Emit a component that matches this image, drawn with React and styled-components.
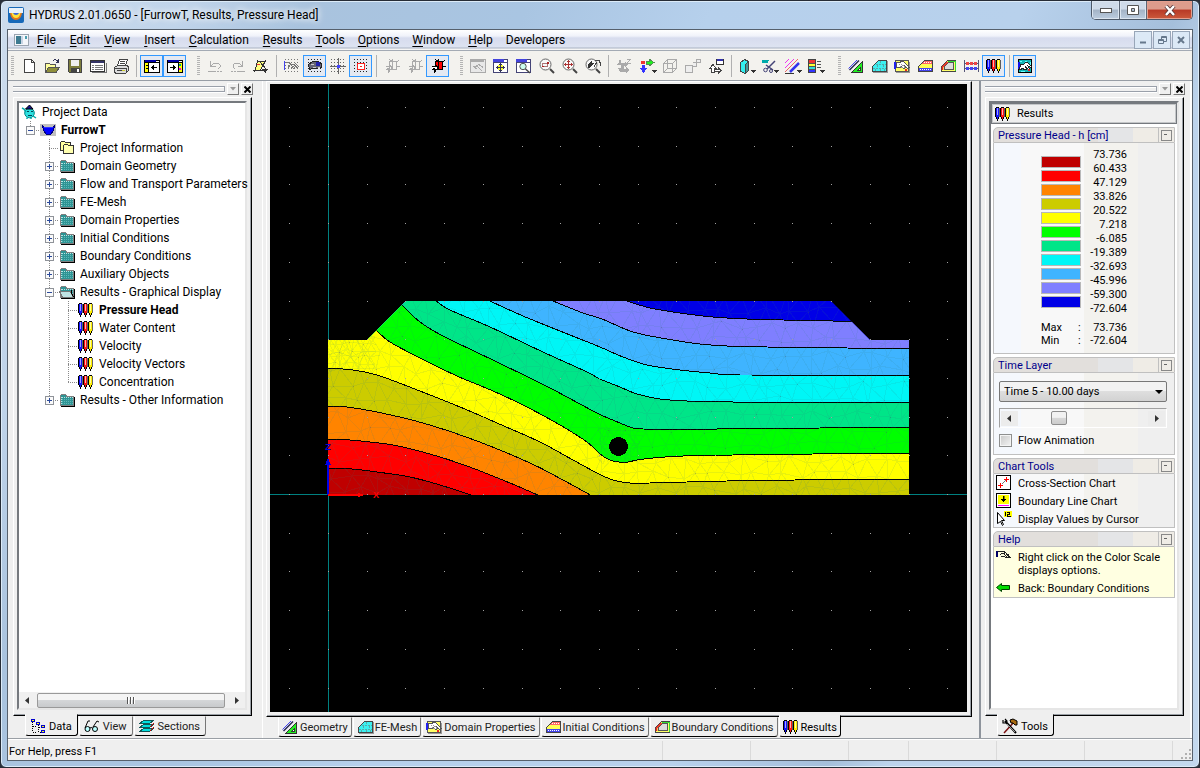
import React from "react";
import styled, { createGlobalStyle, css } from "styled-components";

const GlobalStyle = createGlobalStyle`
  * { box-sizing: border-box; }
  html, body, #root { height: 100%; }
  body { margin: 0; background: #2a2f38; color: #000; overflow: hidden; }
  button, input, select { font: inherit; color: inherit; margin: 0; }
  button { padding: 0; border: 0; background: none; }
`;

const ui = `12px/16px Roboto, "Liberation Sans", sans-serif`;
const dialog = `11px/13px Roboto, "Liberation Sans", Arial, sans-serif`;

/* ---------- icons ---------- */

const Glyph = styled.svg.attrs({ viewBox: "0 0 16 16", "aria-hidden": true })`
  width: 16px;
  height: 16px;
  flex: none;
  display: block;
  overflow: visible;
  fill: none;
  stroke: #000;
  stroke-width: 1;
  shape-rendering: crispEdges;
`;

const Px = ({ d, f, s }) => <path d={d} fill={f || "none"} stroke={s || "#000"} />;
const dots = (c = "#444") => {
  let d = "";
  for (let y = 1; y < 16; y += 3) for (let x = 1; x < 16; x += 3) d += `M${x} ${y}h1v1h-1z`;
  return <path d={d} fill={c} stroke="none" />;
};
const pen = (x, c, tint) => (
  <g key={x} stroke="none">
    <path d={`M${x} 2h1v9h-1zM${x + 1} 1h3v1h-3zM${x + 1} 11h1v2h-1zM${x + 3} 11h1v2h-1zM${x + 2} 13h1v2h-1z`} fill="#000" />
    <path d={`M${x + 4} 2h1v9h-1z`} fill="#000" fillOpacity="0.6" />
    <path d={`M${x + 1} 2h3v9h-1v2h-1v-2h-1z`} fill={c} />
    <path d={`M${x + 2} 2h1v7h-1z`} fill={tint} />
  </g>
);
const pens = <g>{pen(0, "#1414ff", "#a0a0ff")}{pen(5, "#ff1414", "#ffb0b0")}{pen(10, "#ffee00", "#ffffa0")}</g>;
const caret = <path d="M13 12h5l-2.5 3z" fill="#333" stroke="none" />;
const swirl = (c) => {
  const red = c === "#000";
  return (
    <g>
      <path d="M5.5 3.500h7v8h-7z" stroke={c} fill={red ? "#f00" : "none"} />
      <path d="M1.500 8.500h4v-2l3 4-3 1v2l-1 1v-4l-2 1" fill={red ? "#fff" : "none"} stroke={c} />
      <path d="M8.500 1v9M10 3.500h3l2-1M12.500 8h3M5.500 1.500l4 3" stroke={c} />
    </g>
  );
};
const lens = (
  <g shapeRendering="auto">
    <circle cx="6.5" cy="6.5" r="5.5" fill="#f8f8f8" stroke="#666" />
    <path d="M11 11l4 4" stroke="#444" strokeWidth="2" />
  </g>
);
const hand = (
  <g>
    <path d="M0 5h2v7h-2z" fill="#22e" stroke="none" />
    <path d="M2.500 5.500h3l2-1h2l2 2 4 4-2 1-3-3 1 2-2 1-2-2-2 1h-3z" fill="#fff" stroke="#555" />
    <path d="M5 7.500h3l3 3M6 9l3 2" stroke="#999" strokeDasharray="1 1" />
  </g>
);
const slab = (fill) => <path d="M1.5 13.5v-5l6-6h8v11z" fill={fill} stroke="#444" />;
const folder = (
  <g>
    <path d="M2 14.500h13.500v-10" stroke="#000" />
    <Px d="M1.500 13.500v-10l1-1h4l1 1v1h7v9z" f="#2f9494" s="#808080" />
    <path d="M3 5.500h11M2.500 5v8" stroke="#b9e4e4" strokeDasharray="1 1" />
    <path d="M3 7.500h11M3 9.500h11M3 11.500h11" stroke="#5cb8b8" strokeDasharray="1 1" />
  </g>
);

const ICONS = {
  app: <g shapeRendering="auto">
    <rect x="0" y="0" width="16" height="16" rx="2" fill="#1668b8" stroke="none" />
    <path d="M1 1h14v5H1z" fill="#e8f1fa" stroke="none" />
    <path d="M2 6h12q-1 7-6 7t-6-7z" fill="#e4781c" stroke="none" />
    <path d="M3.500 6h9q-1 5-4.500 5t-4.500-5z" fill="#ffe23c" stroke="none" />
    <path d="M5 6h6q-1 2-3 2t-3-2z" fill="#3c66d8" stroke="none" />
  </g>,
  doc: <g><Px d="M.5 2.500h14v11h-14z" f="#f4f6fa" s="#9aa4b0" /><path d="M2 4h5v8H2z" fill="#3d7a90" stroke="none" /><path d="M7 4h2v8H7z" fill="#c8d4e4" stroke="none" /><path d="M11 4h2v3h-2z" fill="#4c9db0" stroke="none" /></g>,
  new: <Px d="M3.500 1.500h7l3 3v10h-10zM10.500 1.500v3h3" f="#fff" s="#444" />,
  open: <g><path d="M1.500 14.500v-9h4l1 1h5v3" fill="#ffff9c" stroke="#555" /><path d="M1.500 14.500l3-5h11l-3.500 5z" fill="#8f8f3a" stroke="#555" /><path d="M9 3q3-3 5 1M14.500 1v3.500h-3" stroke="#335" /></g>,
  save: <g><Px d="M1.500 1.500h13v13h-12l-1-1z" f="#7d7d3c" s="#444" /><path d="M4 2h8v6H4z" fill="#eee" stroke="none" /><path d="M4 10h9v4H4z" fill="#444" stroke="none" /><path d="M10 11h2v3h-2z" fill="#fff" stroke="none" /></g>,
  list: <g><Px d="M.5 2.500h14v11h-14z" f="#fff" s="#333" /><path d="M1 3h13v2H1z" fill="#336" stroke="none" /><path d="M2 7.500h2M5 7.500h8M2 9.500h2M5 9.500h8M2 11.500h2M5 11.500h8M2 14.500h14v-10" stroke="#777" /></g>,
  print: <g><path d="M4.500 7.500l2-6h8l-2 6zM7 3.500h5M6.500 5.500h5" fill="#fff" stroke="#444" /><path d="M1.500 13.500v-4l3-2h10l1 2v3l-3 3h-10z" fill="#ddd" stroke="#444" /><path d="M2 10.500h11v4M4 12.500h7" stroke="#444" /><path d="M9 12h3v1H9z" fill="#cc3" stroke="none" /></g>,
  dockLeft: <g><Px d="M.5 2.500h15v12H.5z" f="#fff" /><path d="M1 2h11v2H1z" fill="#00a" stroke="none" /><path d="M1 5h3v9H1z" fill="#ff0" stroke="none" /><path d="M4.500 4v10M1 4.500h14M7 9.500h6M9.500 7v5M8.500 8v3M2 7.500h2M2 10.500h2" /></g>,
  dockRight: <g><Px d="M.5 2.500h15v12H.5z" f="#fff" /><path d="M1 2h11v2H1z" fill="#00a" stroke="none" /><path d="M12 5h3v9h-3z" fill="#ff0" stroke="none" /><path d="M11.500 4v10M1 4.500h14M3 9.500h6M6.500 7v5M7.500 8v3" /><path d="M12 6h2v2h-2z" fill="#0a8" stroke="none" /><path d="M12 10h2v2h-2z" fill="#e0f" stroke="none" /></g>,
  undo: <path d="M3.500 3v5.500h5M4 8l3-3h4l2 2v2l-2 2M1 13.500h8M10 13.500h2M13 13.500h2" stroke="#aaa" />,
  redo: <path d="M12.500 3v5.500h-5M12 8l-3-3H5l-2 2v2l2 2M7 13.500h8M4 13.500h2M1 13.500h2" stroke="#aaa" />,
  poly: <g><path d="M5 4h7l-5 8H2z" fill="#ffff80" stroke="none" /><path d="M1.500 14L5 2M0 12.500h12M5 3.500h8M13 2l-6 11M6 3l8 9" stroke="#333" /><path d="M9 11h6l-2.500 4z" fill="#333" stroke="none" /><path d="M4 6l3 1" stroke="#e33" /></g>,
  handGrid: <g>{dots("#777")}<path d="M.5 3v9" stroke="#44e" /><path d="M1 4.500h4l2 2h3l4 4M4 10l3-4M7 10l3-2M9 11l2-2M11 5l4 4" stroke="#777" /></g>,
  eyeGrid: <g>{dots("#222")}<path d="M1.500 6.500l4-3h5l4 2v4h-2l-3 1h-4l-3 1z" fill="#667" stroke="#222" /><path d="M9 4h4v4H9z" fill="#22a" stroke="none" /><path d="M4 6.500h3M6 9.500h3M11 9.500h2" stroke="#ccc" /></g>,
  crossGrid: <g>{dots("#666")}<path d="M8.500 0v16M0 8.500h16" stroke="#666" /><path d="M7 7h3v3H7z" fill="#44f" stroke="none" /></g>,
  boxGrid: <g>{dots("#222")}<Px d="M4.500 5.500h7v6h-7z" f="#fff" s="#f22" /><path d="M7 8h2v1H7z" fill="#e22" stroke="none" /></g>,
  swirlGray: swirl("#aaa"),
  swirlRed: swirl("#000"),
  viewGray: <g><Px d="M.5 1.500h15v13H.5z" f="#e8e8e8" s="#aaa" /><path d="M1 3h13" stroke="#aaa" strokeWidth="2" /><path d="M3 8.500h3l3-2 4 3M6 7l6 6M4 9l3 2" stroke="#aaa" /></g>,
  viewMove: <g><Px d="M.5 1.500h14v13H.5z" f="#fff" s="#447" /><path d="M0 1h11v3H0z" fill="#44d" stroke="none" /><path d="M1 4.500h14" stroke="#447" /><path d="M5 7h5v5H5z" fill="#ff3" stroke="none" /><path d="M7.500 5v9M3 9.500h9M6 6.500h3M6 12.500h3M4.500 8v3M10.500 8v3" stroke="#335" /></g>,
  viewZoom: <g><Px d="M.5 1.500h14v13H.5z" f="#fff" s="#447" /><path d="M0 1h11v3H0z" fill="#44d" stroke="none" /><path d="M1 4.500h14" stroke="#447" /><g shapeRendering="auto"><circle cx="7" cy="8.500" r="3.200" fill="#cfe" stroke="#555" /><path d="M9.500 11l4.500 4" stroke="#444" strokeWidth="1.500" /></g></g>,
  zoomBox: <g>{lens}<path d="M3.500 5.500h5v3h-5z" stroke="#a77" /><path d="M8 4h2v2H8zM3 8h2v1H3z" fill="#a22" stroke="none" /></g>,
  zoomPlus: <g>{lens}<path d="M6.500 2v9M2 6.500h9M5 3.500h3M5 9.500h3M3.500 5v3M9.500 5v3" stroke="#a33" /></g>,
  zoomPrev: <g>{lens}<path d="M3 10V6l4-3v2l2 0-5 6z" fill="#333" stroke="none" /><path d="M10 2.500h4l1 2v3M9 9l3-5" stroke="#444" /></g>,
  axesGray: <g stroke="none" fill="#aaa"><path d="M3 2h2v3h4v-1l3 2-3 3V8H5V7H1l2-3zM2 10h3V8h3v3h2V9l4 3-4 3v-1H4z" /><path d="M10.500 1.500h4l-4 4h4" stroke="#aaa" fill="none" /></g>,
  axes: <g><path d="M2 3h4v3H2z" fill="#e33" stroke="none" /><path d="M7 3h3V1l5 3.500L10 8V6H7z" fill="#2e2" stroke="#585" /><path d="M3 7h3v3h2l-3.500 5L1 10h2z" fill="#33f" stroke="none" />{caret}</g>,
  cube: <path d="M1.500 5.500h9v9h-9zM1.500 5.500l4-4h9l-4 4M14.500 1.500v9l-4 4M5.500 1.500v9h9M5.500 10.500l-4 4" stroke="#aaa" />,
  boxes: <path d="M.5 7.500h7v7h-7zM7.500 4.500h4v4h-4M11.500 1.500h4v3h-4zM8 4h4" stroke="#aaa" fill="#eee" />,
  views: <g><path d="M3.500 14.500v-4h-2l3.500-4 3 4h-2v4zM6 11.500h4v-2l3 3-3 3v-2H6" stroke="#444" fill="#fff" /><Px d="M8.500 1.500h7v5h-7z" f="#fff" s="#333" /><path d="M9 1h6v2H9z" fill="#33a" stroke="none" /></g>,
  solid: <g transform="translate(-1 0)"><path d="M2.500 4.500l4-3 4 2v9l-3 3-5-2z" fill="#3ee" stroke="#444" /><path d="M7.500 6.500l3-3v9l-3 3z" fill="#499" stroke="#444" />{caret}</g>,
  cut: <g transform="translate(-1 0)"><path d="M1 2.500h7M1 4.500h6M1 3.500h6" stroke="#0aa" /><g shapeRendering="auto"><path d="M14 3L6 11M5 7l7 5" stroke="#447" strokeWidth="1.500" /><circle cx="4.500" cy="12" r="1.800" stroke="#447" /><circle cx="10" cy="13" r="1.500" stroke="#447" /></g>{caret}</g>,
  hatch: <g transform="translate(-1 0)"><g shapeRendering="auto"><path d="M1 5l4-4M1 10l9-9" stroke="#e3e" /><path d="M1 14L14 1" stroke="#e66" /><path d="M6 14L15 5" stroke="#33e" strokeWidth="2.500" /></g><path d="M1 15.500h9" stroke="#333" />{caret}</g>,
  scale: <g transform="translate(-1 0)"><path d="M1.500 1.500h7v13h-7z" fill="#33f" stroke="#444" /><path d="M2 2h6v3H2z" fill="#e33" stroke="none" /><path d="M2 5h6v3H2z" fill="#ff3" stroke="none" /><path d="M2 8h6v3H2z" fill="#3dd" stroke="none" /><path d="M10 3.500h4M10 6.500h4M10 9.500h4M2 5.500h6M2 8.500h6M2 11.500h6" stroke="#555" />{caret}</g>,
  geometry: <g><path d="M3.500 14.500h11V3.500z" fill="#2e2" stroke="#333" /><path d="M9.500 12.500h3v-3z" fill="#fff" stroke="#333" /><g shapeRendering="auto"><path d="M1.500 12L11 2.500" stroke="#225" strokeWidth="1.500" /><path d="M.5 10.500L9 2" stroke="#44e" /></g></g>,
  mesh: <g><path d="M2 14.500h14.500v-12" stroke="#999" />{slab("#3cf0f0")}<path d="M2 10.500h13M5 6.500h10M9.500 3v3M12.500 7v3M6.500 7v3M9.500 11v2M4.500 11v2M13.500 11v2" stroke="#5aa" strokeDasharray="2 1" /></g>,
  domain: <g><path d="M2 14.500h13.500v-11" stroke="#999" /><path d="M1.500 2.500h13v11h-13z" fill="#ffff66" stroke="#555" /><g transform="translate(0 -1)">{hand}</g><path d="M11 11h2v2h-2z" fill="#e22" stroke="none" /></g>,
  initial: <g><path d="M4 6l4-4h8v4z" fill="#f66" stroke="none" /><path d="M1 10V8l3-2h12v4z" fill="#ff5" stroke="none" /><path d="M1 10h15v4H1z" fill="#44e" stroke="none" /><path d="M7 4.500h8M3 11.500h12" stroke="#fff" strokeDasharray="1 1" />{slab("none")}</g>,
  boundary: <g>{slab("#ff6")}<path d="M4.500 11.500v-3l4-4h5v7z" fill="#ddd" stroke="#555" /><path d="M8 3.500h7v9" stroke="#3d3" /><path d="M2.500 12V9l5-5" stroke="#e22" strokeWidth="1.500" shapeRendering="auto" /></g>,
  links: <g><path d="M1.500 2v12M15.500 2v12" stroke="#557" /><path d="M1 5.500h15M1 10.500h15" stroke="#557" /><path d="M3 4h3v3H3zM7 4h3v3H7zM11 4h3v3h-3z" fill="#e44" stroke="none" /><path d="M3 9h3v3H3zM7 9h3v3H7zM11 9h3v3h-3z" fill="#44e" stroke="none" /></g>,
  pens,
  display: <g><Px d="M1.500 1.500h13v13h-13z" f="#12b4b4" /><path d="M3 3.500h2M8 3.500h2M13.500 4v3M4 13.500h4" stroke="#6ff" /><path d="M1 4h2v7H1z" fill="#11e" stroke="none" /><path d="M3.500 6.500h3l2-2h2l4 4-1 1-3-2 2 3-1 1-3-3 1 3-2 0-2-1-2 1h-1z" fill="#fff" stroke="#222" /><path d="M11 11h2v2h-2z" fill="#e22" stroke="none" /></g>,
  hydrus: <g shapeRendering="auto"><circle cx="8.500" cy="9" r="4.800" fill="#2de0e0" stroke="#088" /><path d="M4.500 5l4-4 3.500 4z" fill="#118" stroke="#000" /><path d="M1 4l2 1 2 3M12 12l3 2M6 13.500v1.500M10 13.500v1.500" stroke="#0aa" strokeWidth="1.500" /><path d="M6 7h2v1H6zM10 7h2v1h-2zM7 11h4v1H7z" fill="#045" stroke="none" /></g>,
  furrow: <g><path d="M0 2h16v12H0z" fill="#c0c0c0" stroke="none" /><path d="M2.500 3.500l1 5 3 4h4l3-4 1-5-2 2h-8z" fill="#00f" stroke="#007" /><path d="M4 5.500h9" stroke="#33f" /></g>,
  folders: <g><Px d="M1.500 10.500v-8l1-1h3l1 1h5v9z" f="#ffff9c" s="#333" /><Px d="M4.500 13.500v-8l1-1h3l1 1h5v8z" f="#ffffb0" s="#333" /></g>,
  folder,
  folderOpen: <g>{folder}<path d="M.5 7.500h11l3 6h-11z" fill="#bfe3e3" stroke="#777" /><path d="M12.500 6v3l2 4" stroke="#000" /></g>,
  tabData: <g><path d="M2.500 4v10h4M3 8.500h4M8.500 7v7h3M9 9.500h3" strokeDasharray="1 1" /><path d="M1.500 1.500h3v2h-3zM6.500 4.500h3v2h-3zM11.500 7.500h3v2h-3zM11.500 12.500h3v2h-3z" fill="#ff0" stroke="#00c" /></g>,
  glasses: <g shapeRendering="auto"><circle cx="3.500" cy="11" r="2.500" fill="#bff" /><circle cx="11" cy="11" r="2.500" fill="#bff" /><path d="M6 10q1-1 2.500 0M1 10l3-7 2 0M9 9l4-6 2 1" /></g>,
  sections: <g><path d="M.5 13.500l4-3h10l-4 3zM.5 9.500l4-3h10l-4 3zM.5 5.500l4-3h10l-4 3z" fill="#0dd" stroke="#155" /><path d="M15 5l-4 4M15 9l-4 4" stroke="#c00" /></g>,
  tools: <g shapeRendering="auto"><path d="M2 15L12 4" stroke="#7a1010" strokeWidth="1.500" /><path d="M3 3l11 12" stroke="#000" strokeWidth="2" /><path d="M5 6l8 8" stroke="#fff" strokeWidth=".6" /><path d="M1 2v3h3l1-2-2-2" strokeWidth="1.200" /><path d="M8 2l3-1 4 2v4h-2l-2-2-2 0z" fill="#a86a10" stroke="#000" /></g>,
  cross: <g><Px d="M.5 .5h14v14H.5z" f="#fff" /><path d="M4 11l7-7" stroke="#777" strokeDasharray="2 1" /><path d="M2 10.500h5M4.500 8v5M8 4.500h5M10.500 2v5" stroke="#f00" /></g>,
  bline: <g><Px d="M.5 .5h14v14H.5z" f="#fff" /><path d="M2 2h11v9H2z" fill="#ff0" stroke="none" /><path d="M7 3h1v3h2L7.500 9 5 6h2z" fill="#000" stroke="#000" strokeWidth=".5" /><path d="M2 12.500h11" stroke="#f0f" /></g>,
  pointer: <g><path d="M1.500 1.500v11l3-2 2 4 1-1-2-4h3z" fill="#fff" shapeRendering="auto" /><path d="M8 0h8v6H8z" fill="#ff0" stroke="none" /><path d="M9.500 1v4M11 1.500h2.500v2H11.500v1.500h3" /></g>,
  handSmall: <g><path d="M0 2h2v6H0z" fill="#006" stroke="none" /><path d="M2 2.500h6l5 4M3.500 6.500l2-2h3M5 7.500h3l2 1M8 5l3 3M10 8.500h4l-4-4" fill="none" stroke="#222" /></g>,
  back: <path d="M.5 7.500l5-4v2h8v4h-8v2z" fill="#0d0" stroke="#040" shapeRendering="auto" />,
};

const Icon = ({ name }) => <Glyph>{ICONS[name]}</Glyph>;

/* ---------- window frame ---------- */

const WindowFrame = styled.div`
  min-height: 100vh;
  height: 100vh;
  display: flex;
  flex-direction: column;
  padding: 0 6px 6px;
  border: 1px solid #262c36;
  border-radius: 6px;
  background: linear-gradient(115deg, #cddced 0, #c0d4ea 12%, #a9c3de 20%, #a9c5e2 34%, #b6d0ec 46%, #b8d1ec 66%, #a5bfdb 76%, #bcd3ec 80%, #c3d8ee 100%);
  box-shadow: inset 0 0 0 1px #dcebf8;
  font: ${ui};
`;
const TitleBar = styled.header`
  height: 28px;
  flex: none;
  display: flex;
  align-items: center;
  gap: 5px;
  padding-left: 1px;
`;
const Title = styled.h1`
  flex: 1;
  margin: 0;
  font: inherit;
  white-space: nowrap;
  text-shadow: 0 0 6px #fff, 0 0 8px #fff;
`;
const CaptionGroup = styled.div`
  align-self: flex-start;
  display: flex;
  height: 19px;
  border: 1px solid #4c5868;
  border-top: 0;
  border-radius: 0 0 5px 5px;
  overflow: hidden;
`;
const CaptionButton = styled.button`
  width: ${(p) => (p.$close ? 46 : 27)}px;
  display: grid;
  place-items: center;
  border-left: ${(p) => (p.$first ? 0 : 1)}px solid #5b6675;
  box-shadow: inset 0 0 0 1px ${(p) => (p.$close ? "#e4a090" : "#dbe5f0")};
  background: ${(p) =>
    p.$close
      ? "linear-gradient(#dc9c8c 0 45%, #b83a26 50%, #cc5a3c)"
      : "linear-gradient(#cfdbe9 0 45%, #a3b3c6 50%, #bccde0)"};
`;
const Client = styled.div`
  flex: 1;
  min-height: 0;
  display: flex;
  flex-direction: column;
  border: 1px solid #56606c;
  background: #efefef;
`;

/* ---------- menu and toolbar ---------- */

const MenuBar = styled.nav`
  height: 21px;
  flex: none;
  display: flex;
  align-items: center;
  padding: 0 2px 0 6px;
  border-bottom: 1px solid #a3aab4;
  background: linear-gradient(#fff 0, #f0f2fa 30%, #d7dcee 40%, #dde3f1 85%, #a9b2c2 90%, #f5f5f5 95%);
`;
const MenuItem = styled.button`
  padding: 0 7px 0 6px;
  height: 20px;
  &:nth-of-type(-n + 6) { padding-left: 7px; }
  u { text-underline-offset: 2px; }
`;
const MenuSpacer = styled.div`flex: 1;`;
const MdiButton = styled.button`
  width: 18px;
  height: 18px;
  margin-left: 1px;
  display: grid;
  place-items: center;
  border: 1px solid #98a6b8;
  background: #dce9f6;
`;
const ToolBar = styled.div`
  height: 30px;
  flex: none;
  display: flex;
  align-items: center;
  padding-left: 3px;
  background: #f3f2ee;
  border-bottom: 1px solid #979da5;
  overflow: hidden;
`;
const Grip = styled.span`
  width: ${(p) => (p.$first ? 6 : 17)}px;
  height: 20px;
  flex: none;
  background: repeating-linear-gradient(#b4b4b4 0 1px, transparent 1px 2px) ${(p) => (p.$first ? 0 : 11)}px 0 / 3px 100% no-repeat;
`;
const Separator = styled.span`
  width: 8px;
  height: 22px;
  flex: none;
  background: linear-gradient(#b0b0b0, #b0b0b0) 4px 0 / 1px 100% no-repeat;
`;
const ToolButton = styled.button`
  width: 23px;
  height: 22px;
  flex: none;
  display: flex;
  align-items: center;
  padding-left: 3px;
  border: 1px solid ${(p) => (p.$on ? "#3399ff" : "transparent")};
  background: ${(p) => (p.$on ? "#e4e9f2" : "none")};
`;

/* ---------- docks ---------- */

const Main = styled.div`
  flex: 1;
  min-height: 0;
  display: flex;
`;
const Dock = styled.aside`
  flex: none;
  width: ${(p) => (p.$side === "left" ? 255 : 213)}px;
  display: flex;
  flex-direction: column;
  padding: ${(p) => (p.$side === "left" ? "0 9px 0 5px" : "0 5px 0 4px")};
  border-right: 1px solid #fff;
  ${(p) => p.$side === "right" && css`
    border-left: 2px solid #8e949c;
    border-right: 2px solid #fff;
  `}
`;
const DockCaption = styled.div`
  height: 16px;
  flex: none;
  display: flex;
  align-items: center;
  gap: 2px;
`;
const CaptionLines = styled.span`
  flex: 1;
  height: 6px;
  border: solid #9aa0aa;
  border-width: 1px 1px 1px 0;
  box-shadow: 0 1px #fff, inset 0 1px #fff;
`;
const SmallButton = styled.button`
  width: 12px;
  height: 12px;
  display: grid;
  place-items: center;
  background: #efefef;
  border: 1px solid;
  border-color: #fff #777 #777 #fff;
`;
const DockFrame = styled.div`
  flex: 1;
  min-height: 0;
  display: flex;
  flex-direction: column;
  padding: 3px 4px 5px 3px;
  margin-right: 1px;
  border: 1px solid;
  border-color: #fff #000 #000 #fff;
  box-shadow: inset -1px -1px #9a9fa5;
`;
const Sunken = styled.div`
  flex: 1;
  min-height: 0;
  display: flex;
  flex-direction: column;
  background: #fff;
  border: 2px solid;
  border-color: #75797e #e6e6e6 #e6e6e6 #75797e;
`;
const ScrollBar = styled.div`
  height: 16px;
  flex: none;
  display: flex;
  align-items: center;
  background: #f0f0f0;
`;
const ArrowButton = styled.button`
  width: 17px;
  height: 15px;
  display: grid;
  place-items: center;
  background: ${(p) => (p.$boxed ? "#ececec" : "none")};
`;
const Thumb = styled.div`
  flex: 1;
  height: 15px;
  margin: 0 3px 0 1px;
  display: grid;
  place-items: center;
  border: 1px solid #999;
  border-radius: 2px;
  background: linear-gradient(#f4f4f4 0 45%, #d4d6d8 50%, #c8cacc);
`;
const ThumbGrip = styled.span`
  width: 8px;
  height: 7px;
  background: repeating-linear-gradient(90deg, #555 0 1px, #fff 1px 2px, transparent 2px 3px);
`;

/* ---------- tree ---------- */

const Tree = styled.ul`
  flex: 1;
  margin: 0;
  padding: 0 0 0 2px;
  list-style: none;
`;
const TreeRow = styled.li`
  height: 18px;
  display: flex;
  align-items: center;
  white-space: nowrap;
  font-weight: ${(p) => (p.$bold ? 700 : 400)};
`;
const TreeLabel = styled.span`padding-left: 5px;`;
const IndentCell = styled.span`
  width: 19px;
  height: 18px;
  flex: none;
  display: grid;
  place-items: center;
  background:
    repeating-linear-gradient(#8a8a8a 0 1px, transparent 1px 2px) 9px 0 / 1px ${(p) => ({ full: 18, half: 10 })[p.$line] || 0}px no-repeat,
    repeating-linear-gradient(90deg, #8a8a8a 0 1px, transparent 1px 2px) 9px 9px / ${(p) => (p.$branch ? 10 : 0)}px 1px no-repeat;
`;
const Expander = styled.button`
  width: 9px;
  height: 9px;
  border: 1px solid #8f9399;
  background:
    linear-gradient(#2b4a9b, #2b4a9b) 1px 3px / 5px 1px no-repeat,
    linear-gradient(#2b4a9b, #2b4a9b) 3px 1px / 1px ${(p) => (p.$open ? 0 : 5)}px no-repeat,
    #fafafa;
`;

const TREE = [
  { d: 0, icon: "hydrus", text: "Project Data" },
  { d: 1, icon: "furrow", text: "FurrowT", bold: true, open: true },
  { d: 2, icon: "folders", text: "Project Information" },
  { d: 2, icon: "folder", text: "Domain Geometry", open: false },
  { d: 2, icon: "folder", text: "Flow and Transport Parameters", open: false },
  { d: 2, icon: "folder", text: "FE-Mesh", open: false },
  { d: 2, icon: "folder", text: "Domain Properties", open: false },
  { d: 2, icon: "folder", text: "Initial Conditions", open: false },
  { d: 2, icon: "folder", text: "Boundary Conditions", open: false },
  { d: 2, icon: "folder", text: "Auxiliary Objects", open: false },
  { d: 2, icon: "folderOpen", text: "Results - Graphical Display", open: true },
  { d: 3, icon: "pens", text: "Pressure Head", bold: true },
  { d: 3, icon: "pens", text: "Water Content" },
  { d: 3, icon: "pens", text: "Velocity" },
  { d: 3, icon: "pens", text: "Velocity Vectors" },
  { d: 3, icon: "pens", text: "Concentration", last: true },
  { d: 2, icon: "folder", text: "Results - Other Information", open: false, last: true },
];

const TreeItem = ({ item }) => (
  <TreeRow $bold={item.bold}>
    {item.d > 1 && <IndentCell />}
    {item.d > 2 && <IndentCell $line="full" />}
    {item.d > 0 && (
      <IndentCell $line={item.last || item.d === 1 ? "half" : "full"} $branch>
        {item.open !== undefined && <Expander $open={item.open} aria-label={item.text} />}
      </IndentCell>
    )}
    <Icon name={item.icon} />
    <TreeLabel>{item.text}</TreeLabel>
  </TreeRow>
);

/* ---------- tabs ---------- */

const Tabs = styled.div`
  height: ${(p) => (p.$tight ? 21 : 22)}px;
  flex: none;
  display: flex;
  gap: 1px;
  padding-left: 12px;
  font: ${dialog};
`;
const Tab = styled.button`
  height: 20px;
  display: flex;
  align-items: center;
  gap: ${(p) => (p.$tight ? 2 : 3)}px;
  padding: ${(p) => (p.$tight ? "0 3px" : "0 5px 0 4px")};
  white-space: nowrap;
  color: #222;
  border: 1px solid;
  border-color: transparent #777 #000 #fff;
  border-radius: 0 0 3px 3px;
  ${(p) => p.$on && css`
    position: relative;
    top: -2px;
    height: 22px;
    padding-top: 2px;
    color: #000;
    background: #efefef;
    border-right-color: #000;
  `}
`;

/* ---------- centre ---------- */

const Workspace = styled.main`
  flex: 1;
  min-width: 0;
  display: flex;
  flex-direction: column;
  padding: 0 7px 0 3px;
`;
const ViewFrame = styled.div`
  flex: 1;
  min-height: 0;
  display: flex;
  padding: 2px 4px 4px 3px;
  background: #efefef;
  border: 1px solid;
  border-color: #fff #000 #000 #fff;
  box-shadow: inset -1px -1px #9a9fa5;
`;
const Scene = styled.svg`
  flex: 1;
  min-width: 0;
  width: 100%;
  height: 100%;
  background: #000;
`;

const LEVELS = [
  ["#7f7fff", [[627, 301], [650, 308], [680, 313], [713, 317], [747, 319], [783, 320], [833, 321], [852, 322]]],
  ["#3fb4ff", [[553, 301], [583, 313], [602, 319], [633, 332], [667, 339], [700, 344], [727, 346], [767, 347], [847, 348], [909, 349]]],
  ["#00f6f6", [[490, 301], [523, 316], [570, 335], [600, 347], [623, 357], [647, 365], [680, 370], [710, 373], [740, 375], [867, 375], [909, 376]]],
  ["#00e588", [[436, 301], [450, 310], [490, 327], [543, 352], [587, 372], [600, 379], [620, 387], [637, 394], [660, 399], [687, 401], [733, 402], [909, 402]]],
  ["#00ff00", [[401, 304], [420, 322], [443, 336], [497, 362], [550, 388], [597, 413], [620, 423], [633, 428], [643, 429], [677, 429], [717, 429], [820, 428], [909, 427]]],
  ["#ffff00", [[376, 330], [390, 342], [420, 358], [457, 376], [493, 391], [527, 407], [560, 425], [587, 442], [600, 454], [610, 460], [619, 462], [628, 462], [637, 460], [653, 458], [683, 456], [733, 455], [813, 454], [909, 453]]],
  ["#cccc00", [[327, 368], [353, 370], [377, 375], [407, 386], [460, 407], [497, 423], [540, 442], [573, 460], [597, 473], [613, 480], [630, 483], [650, 483], [687, 482], [727, 481], [795, 480], [909, 479]]],
  ["#ff8400", [[327, 406], [347, 407], [377, 412], [423, 423], [477, 441], [530, 463], [563, 480], [592, 496]]],
  ["#ff0000", [[327, 439], [350, 440], [393, 445], [430, 454], [467, 466], [510, 483], [540, 496]]],
  ["#bf0000", [[327, 468], [352, 469], [377, 472], [410, 477], [440, 485], [474, 496]]],
];

const OUTLINE = "M328 340H367L406 301H831L870 340H909V495H328Z";

/* Catmull-Rom spline through the isoline's points */
const spline = (p) => {
  let d = `M${p[0]}`;
  for (let i = 0; i < p.length - 1; i++) {
    const a = p[i - 1] || p[i], b = p[i], c = p[i + 1], e = p[i + 2] || c;
    d += `C${b[0] + (c[0] - a[0]) / 6} ${b[1] + (c[1] - a[1]) / 6} ${c[0] - (e[0] - b[0]) / 6} ${c[1] - (e[1] - b[1]) / 6} ${c}`;
  }
  return d;
};

const rand = (i, j, k) => {
  const v = Math.sin(i * 127.1 + j * 311.7 + k * 74.7) * 43758.5453;
  return v - Math.floor(v) - 0.5;
};

/* finite-element mesh: a jittered grid split into triangles */
const buildMesh = (x0, y0, x1, y1, s) => {
  const nx = Math.ceil((x1 - x0) / s), ny = Math.ceil((y1 - y0) / s);
  const at = (i, j) => [
    Math.round(x0 + i * s + (j % 2 ? s / 2 : 0) + rand(i, j, 1) * s * 0.6),
    Math.round(y0 + j * s + rand(i, j, 2) * s * 0.6),
  ];
  let lines = "", nodes = "";
  for (let j = 0; j < ny; j++)
    for (let i = 0; i < nx; i++) {
      const p = at(i, j);
      lines += `M${p}L${at(i + 1, j)}M${p}L${at(i, j + 1)}`;
      lines += j % 2 ? `M${p}L${at(i + 1, j + 1)}` : `M${at(i + 1, j)}L${at(i, j + 1)}`;
      if (rand(i, j, 3) > 0.25) nodes += `M${p}h1v1h-1z`;
    }
  return { lines, nodes };
};
const COARSE = buildMesh(320, 295, 915, 500, 15);
const FINE_LEFT = buildMesh(326, 336, 372, 366, 7);
const FINE_HOLE = buildMesh(598, 428, 640, 462, 7);

const gridDots = () => {
  let d = "";
  for (let j = -10; j <= 5; j++)
    for (let i = -1; i <= 16; i++)
      d += `M${Math.round(328 + i * 38.7)} ${Math.round(494 + j * 38.7)}h1v1h-1z`;
  return d;
};
const GRID = gridDots();

const PressureScene = () => (
  <Scene viewBox="270 84 697 628" preserveAspectRatio="xMidYMid slice" role="img" aria-label="Pressure Head" shapeRendering="crispEdges">
    <defs>
      <clipPath id="domain"><path d={OUTLINE} /></clipPath>
    </defs>
    <path d="M328 0h1v900h-1zM-400 494h2400v1h-2400z" fill="#008080" />
    <g clipPath="url(#domain)">
      <path d={OUTLINE} fill="#0000e6" />
      {LEVELS.map(([fill, pts]) => {
        const line = spline(pts);
        const end = pts[pts.length - 1];
        return (
          <g key={fill}>
            <path d={`${line}L920 ${end[1]}V510H310V${pts[0][1]}Z`} fill={fill} />
            <path d={line} fill="none" stroke="#000" strokeWidth="1" />
          </g>
        );
      })}
      <g fill="none" stroke="#2f7f7f" strokeOpacity="0.11">
        <path d={COARSE.lines} />
        <path d={FINE_LEFT.lines} />
        <path d={FINE_HOLE.lines} />
      </g>
      <path d={COARSE.nodes + FINE_LEFT.nodes} fill="#446" fillOpacity="0.3" />
    </g>
    <path d={GRID} fill="#a0a0a0" />
    <circle cx="618.500" cy="446.500" r="9.500" fill="#000" />
    <path d="M327 460h2v35h-2zM325 465l3-7 3 7z" fill="#0000e6" />
    <path d="M328 494h30v2h-30zM358 493l6 2-6 2z" fill="#ff0000" />
    <text x="328" y="450" textAnchor="middle" fill="#0000e6" fontFamily="Liberation Sans, sans-serif" fontWeight="700" fontSize="9">Z</text>
    <text x="376" y="498" textAnchor="middle" fill="#ff0000" fontFamily="Liberation Sans, sans-serif" fontWeight="700" fontSize="9">X</text>
  </Scene>
);

/* ---------- results panel ---------- */

const PanelTitle = styled.h2`
  height: 21px;
  flex: none;
  display: flex;
  align-items: center;
  gap: 6px;
  margin: 0 0 3px;
  padding-left: 3px;
  font: ${dialog};
  background: #efefef;
  border: 1px solid #75797e;
  box-shadow: inset 0 0 0 1px #c4c6c8;
`;
const Group = styled.section`
  flex: none;
  margin: 0 2px 3px 2px;
  font: ${dialog};
`;
const GroupHead = styled.h3`
  height: 16px;
  display: flex;
  align-items: center;
  margin: 0;
  padding-left: 4px;
  font: inherit;
  color: #00008b;
  border: 1px solid #c0c0c0;
  border-top-left-radius: 5px;
  background: linear-gradient(90deg, #e2dfdc 0 58%, #e4e5e7 58% 77%, #efece6 77%);
`;
const GroupName = styled.span`flex: 1;`;
const Collapse = styled.button`
  width: 16px;
  height: 14px;
  display: grid;
  place-items: center;
  border-left: 1px solid #c0c0c0;
  &::before {
    content: "";
    width: 9px;
    height: 9px;
    border: 1px solid #888;
    background: linear-gradient(#666, #666) 2px 3px / 3px 1px no-repeat;
  }
`;
const GroupBody = styled.div`
  padding: ${(p) => p.$pad || "0"};
  border: solid #c0c0c0;
  border-width: 0 1px;
  box-shadow: inset 0 -1px #c0c0c0;
  background: ${(p) => (p.$note ? "#ffffe1" : "linear-gradient(90deg, #f5f8fd 0 15%, #f8f8f8 15% 50%, #f3f2ee 50% 80%, #efefef 80%)")};
`;
const Legend = styled.div`
  display: flex;
  justify-content: flex-start;
  padding: 4px 0 0 47px;
`;
const Swatches = styled.div`
  width: 40px;
  display: flex;
  flex-direction: column;
  gap: 2px;
  padding-top: 9px;
`;
const Swatch = styled.span`
  height: 12px;
  background: ${(p) => p.$c};
  border: 1px solid #b8b8b8;
`;
const Values = styled.ol`
  width: 46px;
  margin: 0;
  padding: 1px 0 0;
  list-style: none;
  line-height: 14px;
  text-align: right;
`;
const Extremes = styled.table`
  margin: 5px 0 0 47px;
  border-collapse: collapse;
  th, td { padding: 0; font-weight: 400; text-align: left; height: 13px; }
  th { width: 37px; }
  td { width: 49px; }
`;
const ExtremeValue = styled.span`
  display: flex;
  justify-content: space-between;
`;
const SelectWrap = styled.div`
  position: relative;
  height: 21px;
  &::after {
    content: "";
    position: absolute;
    right: 4px;
    top: 9px;
    border: 4px solid transparent;
    border-top-color: #000;
    border-bottom: 0;
    pointer-events: none;
  }
`;
const TimeSelect = styled.select`
  appearance: none;
  width: 100%;
  height: 21px;
  padding: 0 4px;
  border: 1px solid #777;
  border-radius: 2px;
  background: linear-gradient(#f2f2f2 0 45%, #dedede 50%, #d2d2d2);
`;
const SliderBox = styled.div`
  height: 20px;
  margin-top: 6px;
  display: flex;
  align-items: center;
  padding: 0 1px;
  border: 1px solid;
  border-color: #a0a0a0 #fff #fff #a0a0a0;
`;
const TimeSlider = styled.input`
  appearance: none;
  flex: 1;
  min-width: 0;
  height: 14px;
  background: transparent;
  &::-webkit-slider-thumb {
    appearance: none;
    width: 16px;
    height: 14px;
    border: 1px solid #8e8e8e;
    border-radius: 2px;
    background: linear-gradient(#f2f2f2 0 45%, #d8d8d8 50%, #ccc);
  }
`;
const CheckLabel = styled.label`
  height: 13px;
  margin: 6px 0 0;
  display: flex;
  align-items: center;
  gap: 6px;
`;
const CheckBox = styled.input`
  appearance: none;
  width: 13px;
  height: 13px;
  border: 1px solid #8e8f8f;
  background: linear-gradient(135deg, #c8c8c8, #f4f4f4);
  box-shadow: inset 0 0 0 1px #f4f4f4;
`;
const Action = styled.button`
  width: 100%;
  min-height: 18px;
  display: flex;
  align-items: flex-start;
  gap: 6px;
  padding: 1px 0 1px 2px;
  text-align: left;
`;
const ActionText = styled.span`padding: 2px 0 1px;`;

const SCALE = ["#bf0000", "#ff0000", "#ff8400", "#cccc00", "#ffff00", "#00ff00", "#00e588", "#00f6f6", "#3fb4ff", "#7f7fff", "#0000e6"];
const VALUES = ["73.736", "60.433", "47.129", "33.826", "20.522", "7.218", "-6.085", "-19.389", "-32.693", "-45.996", "-59.300", "-72.604"];

const Section = ({ title, children, ...body }) => (
  <Group>
    <GroupHead><GroupName>{title}</GroupName><Collapse aria-label={title} /></GroupHead>
    <GroupBody {...body}>{children}</GroupBody>
  </Group>
);

/* ---------- status bar ---------- */

const StatusBar = styled.footer`
  height: 22px;
  flex: none;
  display: flex;
  align-items: stretch;
  border-top: 1px solid #9a9fa5;
  box-shadow: inset 0 1px #fff;
  font: ${dialog};
`;
const StatusText = styled.span`
  flex: 1;
  padding: 6px 0 0 1px;
`;
const StatusCell = styled.span`
  width: ${(p) => p.$w}px;
  margin-top: 2px;
  border-left: 1px solid #dadada;
  display: flex;
  align-items: flex-end;
  justify-content: flex-end;
`;

/* ---------- data ---------- */

const MENUS = ["File", "Edit", "View", "Insert", "Calculation", "Results", "Tools", "Options", "Window", "Help"];
const TOOLS = [
  "new", "open", "save", "list", "print", "|", "*dockLeft", "*dockRight", "#",
  "undo", "redo", "poly", "|", "handGrid", "*eyeGrid", "crossGrid", "*boxGrid", "|", "swirlGray", "swirlGray", "*swirlRed", "#",
  "viewGray", "viewMove", "viewZoom", "zoomBox", "zoomPlus", "zoomPrev", "|", "axesGray", "axes", "cube", "boxes", "views", "|",
  "solid", "cut", "hatch", "scale", "#",
  "geometry", "mesh", "domain", "initial", "boundary", "links", "*pens", "|", "*display",
];
const VIEW_TABS = [
  ["geometry", "Geometry"], ["mesh", "FE-Mesh"], ["domain", "Domain Properties"],
  ["initial", "Initial Conditions"], ["boundary", "Boundary Conditions"], ["pens", "Results", true],
];
const DATA_TABS = [["tabData", "Data", true], ["glasses", "View"], ["sections", "Sections"]];

const Arrow = ({ dir }) => (
  <svg width="5" height="7" viewBox="0 0 5 7" aria-hidden="true">
    <path d={dir === "left" ? "M4 0v7L0 3.500z" : "M1 0v7l4-3.500z"} fill="#333" />
  </svg>
);

const DockBar = () => (
  <DockCaption>
    <CaptionLines />
    <SmallButton aria-label="Dock menu">
      <svg width="6" height="4" viewBox="0 0 6 4"><path d="M0 0h6L3 3.500z" fill="#999" /></svg>
    </SmallButton>
    <SmallButton aria-label="Close dock">
      <svg width="7" height="7" viewBox="0 0 7 7"><path d="M0.500 0.500l6 6M6.500 0.500l-6 6" stroke="#000" strokeWidth="2" /></svg>
    </SmallButton>
  </DockCaption>
);

const TabStrip = ({ items, tight }) => (
  <Tabs role="tablist" $tight={tight}>
    {items.map(([icon, text, on]) => (
      <Tab key={text} $on={on} $tight={tight} role="tab" aria-selected={!!on}><Icon name={icon} />{text}</Tab>
    ))}
  </Tabs>
);

export default function App() {
  return (
    <>
      <GlobalStyle />
      <WindowFrame>
        <TitleBar>
          <Icon name="app" />
          <Title>HYDRUS 2.01.0650 - [FurrowT, Results, Pressure Head]</Title>
          <CaptionGroup>
            <CaptionButton $first aria-label="Minimize">
              <svg width="12" height="5"><rect x=".5" y=".5" width="11" height="4" fill="#fff" stroke="#555" /></svg>
            </CaptionButton>
            <CaptionButton aria-label="Restore">
              <svg width="12" height="10"><path d="M.5 .5h11v9H.5zM4.500 3.500v3h3v-3z" fill="#fff" stroke="#555" fillRule="evenodd" /></svg>
            </CaptionButton>
            <CaptionButton $close aria-label="Close">
              <svg width="12" height="11"><path d="M2 1l8 9M10 1l-8 9" stroke="#533" strokeWidth="4" /><path d="M2 1l8 9M10 1l-8 9" stroke="#fff" strokeWidth="2.500" /></svg>
            </CaptionButton>
          </CaptionGroup>
        </TitleBar>
        <Client>
          <MenuBar>
            <Icon name="doc" />
            {MENUS.map((m) => <MenuItem key={m}><u>{m[0]}</u>{m.slice(1)}</MenuItem>)}
            <MenuItem>Developers</MenuItem>
            <MenuSpacer />
            <MdiButton aria-label="Minimize view"><svg width="8" height="8"><path d="M1 6.500h6" stroke="#66788c" strokeWidth="2" /></svg></MdiButton>
            <MdiButton aria-label="Restore view"><svg width="9" height="9"><path d="M.5 3.500h5v4h-5zM.5 4.500h5M3.500 3V.5h5v5H6M3 1.500h5" stroke="#66788c" fill="none" /></svg></MdiButton>
            <MdiButton aria-label="Close view"><svg width="8" height="8"><path d="M1 1l6 6M7 1L1 7" stroke="#66788c" strokeWidth="2" /></svg></MdiButton>
          </MenuBar>
          <ToolBar>
            <Grip $first />
            {TOOLS.map((t, i) => {
              if (t === "|") return <Separator key={i} />;
              if (t === "#") return <Grip key={i} />;
              const on = t[0] === "*";
              const name = on ? t.slice(1) : t;
              return <ToolButton key={i} $on={on} aria-label={name}><Icon name={name} /></ToolButton>;
            })}
          </ToolBar>
          <Main>
            <Dock $side="left">
              <DockBar />
              <DockFrame>
                <Sunken>
                  <Tree>{TREE.map((t) => <TreeItem key={t.text} item={t} />)}</Tree>
                  <ScrollBar>
                    <ArrowButton aria-label="Scroll left"><Arrow dir="left" /></ArrowButton>
                    <Thumb><ThumbGrip /></Thumb>
                    <ArrowButton aria-label="Scroll right"><Arrow dir="right" /></ArrowButton>
                  </ScrollBar>
                </Sunken>
              </DockFrame>
              <TabStrip items={DATA_TABS} />
            </Dock>
            <Workspace>
              <ViewFrame><PressureScene /></ViewFrame>
              <TabStrip items={VIEW_TABS} tight />
            </Workspace>
            <Dock $side="right">
              <DockBar />
              <DockFrame>
                <Sunken>
                  <PanelTitle><Icon name="pens" />Results</PanelTitle>
                  <Section title="Pressure Head - h [cm]" $pad="0 0 7px">
                    <Legend>
                      <Swatches>{SCALE.map((c) => <Swatch key={c} $c={c} />)}</Swatches>
                      <Values>{VALUES.map((v) => <li key={v}>{v}</li>)}</Values>
                    </Legend>
                    <Extremes>
                      <tbody>
                        <tr><th scope="row">Max</th><td><ExtremeValue><span>:</span>73.736</ExtremeValue></td></tr>
                        <tr><th scope="row">Min</th><td><ExtremeValue><span>:</span>-72.604</ExtremeValue></td></tr>
                      </tbody>
                    </Extremes>
                  </Section>
                  <Section title="Time Layer" $pad="8px 7px 8px 5px">
                    <SelectWrap>
                      <TimeSelect aria-label="Time Layer"><option>Time 5 - 10.00 days</option></TimeSelect>
                    </SelectWrap>
                    <SliderBox>
                      <ArrowButton $boxed aria-label="Previous time"><Arrow dir="left" /></ArrowButton>
                      <TimeSlider type="range" min="0" max="14" defaultValue="4" aria-label="Time" />
                      <ArrowButton $boxed aria-label="Next time"><Arrow dir="right" /></ArrowButton>
                    </SliderBox>
                    <CheckLabel><CheckBox type="checkbox" />Flow Animation</CheckLabel>
                  </Section>
                  <Section title="Chart Tools">
                    <Action><Icon name="cross" /><ActionText>Cross-Section Chart</ActionText></Action>
                    <Action><Icon name="bline" /><ActionText>Boundary Line Chart</ActionText></Action>
                    <Action><Icon name="pointer" /><ActionText>Display Values by Cursor</ActionText></Action>
                  </Section>
                  <Section title="Help" $note $pad="1px 0">
                    <Action><Icon name="handSmall" /><ActionText>Right click on the Color Scale displays options.</ActionText></Action>
                    <Action><Icon name="back" /><ActionText>Back: Boundary Conditions</ActionText></Action>
                  </Section>
                </Sunken>
              </DockFrame>
              <TabStrip items={[["tools", "Tools", true]]} />
            </Dock>
          </Main>
          <StatusBar>
            <StatusText>For Help, press F1</StatusText>
            {[88, 98, 60, 88, 88, 88, 20].map((w, i) => (
              <StatusCell key={i} $w={w}>
                {i === 6 && <svg width="11" height="11" aria-hidden="true"><path d="M8 0h2v2H8zM4 4h2v2H4zM8 4h2v2H8zM0 8h2v2H0zM4 8h2v2H4zM8 8h2v2H8z" fill="#b0b0b0" /></svg>}
              </StatusCell>
            ))}
          </StatusBar>
        </Client>
      </WindowFrame>
    </>
  );
}
